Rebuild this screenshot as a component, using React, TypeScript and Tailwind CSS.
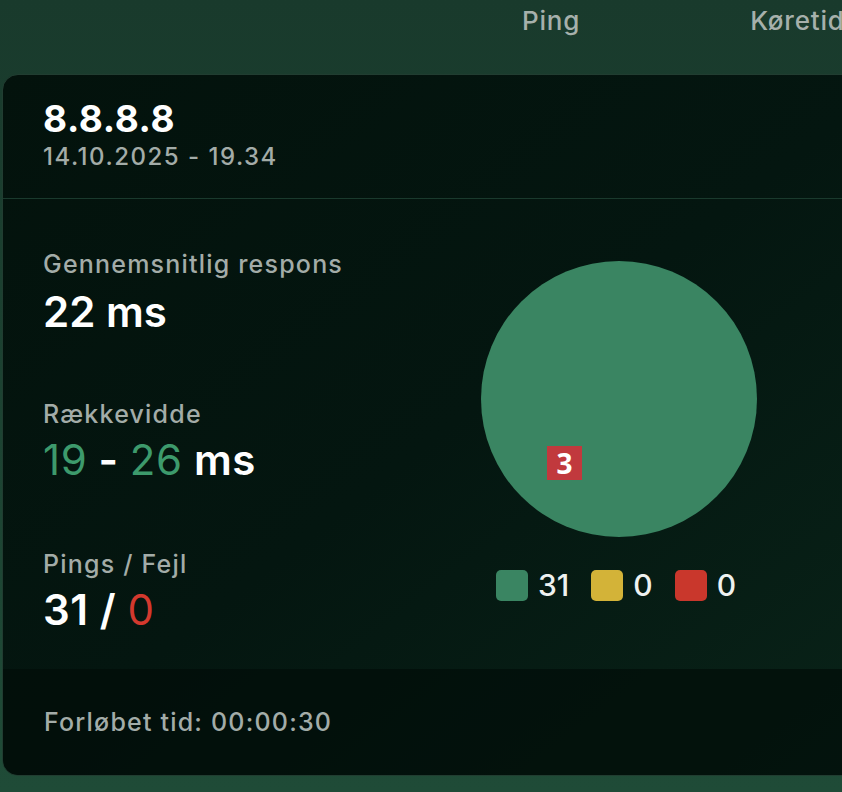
import React from 'react';

// Ping result card, dark green theme
const stats = { ok: 31, warn: 0, fail: 0 };

const Legend = ({ color, value }: { color: string; value: number }) => (
  <div className="flex items-center gap-[10px]">
    <span className={`block w-[32px] h-[31px] rounded-[5px] ${color}`}></span>
    <span className="text-[30px] leading-[31px] font-medium text-[#eef2f0]">{value}</span>
  </div>
);

export default function App() {
  return (
    <div className="w-[842px] h-[792px] overflow-hidden bg-gradient-to-b from-[#193a2c] to-[#1f4b37] font-['Inter',sans-serif]">
      <nav className="h-[74px] flex items-start pt-[5px] pl-[522px] gap-[170px] text-[26px] leading-[32px] font-medium tracking-[0.8px] text-[#a6b0ab] whitespace-nowrap">
        <span>Ping</span>
        <span>Køretid</span>
      </nav>

      <div className="ml-[2px] w-[900px] h-[702px] rounded-[16px] border border-[#213d31] bg-gradient-to-br from-[#03120c] via-[#041610] to-[#0a2419] overflow-hidden flex flex-col">
        <div className="h-[124px] border-b border-[#1a3a2d] px-[40px] pt-[22px]">
          <div className="text-[37px] leading-[44px] font-bold tracking-[0.6px] text-white">8.8.8.8</div>
          <div className="text-[24px] leading-[30px] font-medium tracking-[1.5px] text-[#a3aca8] mt-[1px]">14.10.2025 - 19.34</div>
        </div>

        <div className="flex-1 flex px-[40px]">
          <div className="w-[438px] pt-[50px] flex flex-col">
            <div className="text-[25px] leading-[30px] font-medium tracking-[1.2px] text-[#a3aca8]">Gennemsnitlig respons</div>
            <div className="mt-[8px] text-[42px] leading-[50px] font-semibold text-white">22 ms</div>

            <div className="mt-[62px] text-[25px] leading-[30px] font-medium tracking-[1.2px] text-[#a3aca8]">Rækkevidde</div>
            <div className="mt-[6px] text-[42px] leading-[50px] tracking-[0.6px] text-white">
              <span className="text-[#3d9a6c]">19</span>
              <span className="font-semibold"> - </span>
              <span className="text-[#3d9a6c]">26</span>
              <span className="font-semibold"> ms</span>
            </div>

            <div className="mt-[64px] text-[25px] leading-[30px] font-medium tracking-[1.2px] text-[#a3aca8]">Pings / Fejl</div>
            <div className="mt-[6px] text-[42px] leading-[50px] tracking-[0.6px] text-white">
              <span className="font-semibold">{stats.ok} / </span>
              <span className="text-[#d3392e]">{stats.fail}</span>
            </div>
          </div>

          <div className="w-[276px] pt-[62px] flex flex-col items-center">
            <div className="relative w-[276px] h-[276px] rounded-full bg-[#3a8562]">
              <span className="absolute left-[66px] top-[185px] w-[35px] h-[34px] bg-[#c1393d] text-white text-[28px] leading-[34px] font-bold text-center font-['Open_Sans',sans-serif]">3</span>
            </div>
            <div className="mt-[33px] ml-[-6px] flex items-center gap-[22px]">
              <Legend color="bg-[#3a8562]" value={stats.ok} />
              <Legend color="bg-[#d3b338]" value={stats.warn} />
              <Legend color="bg-[#c9372c]" value={stats.fail} />
            </div>
          </div>
        </div>

        <div className="h-[106px] bg-[#020d08]/70 px-[41px] flex items-center">
          <span className="text-[25px] leading-[30px] font-medium tracking-[1.2px] text-[#a3aca8]">Forløbet tid: 00:00:30</span>
        </div>
      </div>
    </div>
  );
}
